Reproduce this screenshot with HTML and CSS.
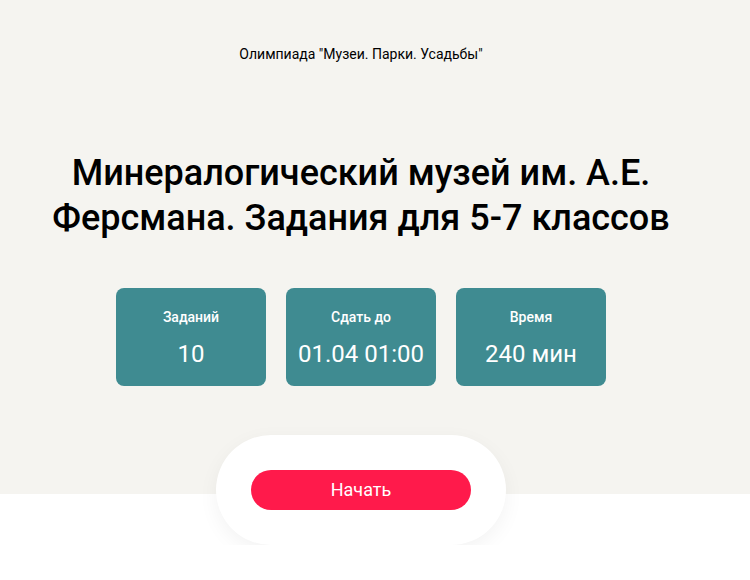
FILE: index.html
```html
<!DOCTYPE html>
<html lang="ru">
	<head>
		<meta charset="utf-8">
		<meta name="viewport" content="width=device-width, initial-scale=1">
		<title>Олимпиада</title>
		<link rel="stylesheet" href="styles.css">
	</head>
	<body>
		<div class="hero">
			<div class="wrap">
				<div class="olymp">Олимпиада "Музеи. Парки. Усадьбы"</div>
				<h1 class="title">Минералогический музей им. А.Е. Ферсмана. Задания для 5-7 классов</h1>
				<div class="stats">
					<div class="stat">
						<div class="stat-label">Заданий</div>
						<div class="stat-value">10</div>
					</div>
					<div class="stat">
						<div class="stat-label">Сдать до</div>
						<div class="stat-value">01.04 01:00</div>
					</div>
					<div class="stat">
						<div class="stat-label">Время</div>
						<div class="stat-value">240 мин</div>
					</div>
				</div>
			</div>
		</div>
		<div class="wrap">
			<div class="start-box">
				<div class="button">Начать</div>
			</div>
		</div>
	</body>
</html>
```

FILE: styles.css
```css
body{
	margin: 0;
	background: #fff;
	font-family: Roboto, "Liberation Sans", sans-serif;
	color: #000;
}
.wrap{
	width: 722px;
	display: flex;
	flex-direction: column;
	align-items: center;
}
.hero{
	background: #f5f4f0;
	padding: 45px 0 108px;
}
.olymp{
	font-size: 14px;
	line-height: 18px;
}
.title{
	margin: 88px 0 0;
	width: 660px;
	text-align: center;
	font-size: 36px;
	line-height: 45px;
	font-weight: 500;
}
.stats{
	margin-top: 47px;
	display: flex;
	gap: 20px;
}
.stat{
	width: 150px;
	height: 98px;
	border-radius: 8px;
	background: #3f8b91;
	color: #fff;
	display: flex;
	flex-direction: column;
	align-items: center;
	padding-top: 20px;
	box-sizing: border-box;
}
.stat-label{
	font-size: 14px;
	line-height: 18px;
	font-weight: 500;
}
.stat-value{
	margin-top: 14px;
	font-size: 24px;
	line-height: 28px;
}
.start-box{
	margin-top: -59px;
	width: 290px;
	height: 110px;
	border-radius: 55px;
	background: #fff;
	box-shadow: 0 6px 20px rgba(0,0,0,0.05);
	display: flex;
	align-items: center;
	justify-content: center;
}
.button{
	width: 220px;
	height: 40px;
	border-radius: 20px;
	background: #ff1a4b;
	color: #fff;
	font-size: 18px;
	line-height: 40px;
	text-align: center;
	cursor: pointer;
}
```
